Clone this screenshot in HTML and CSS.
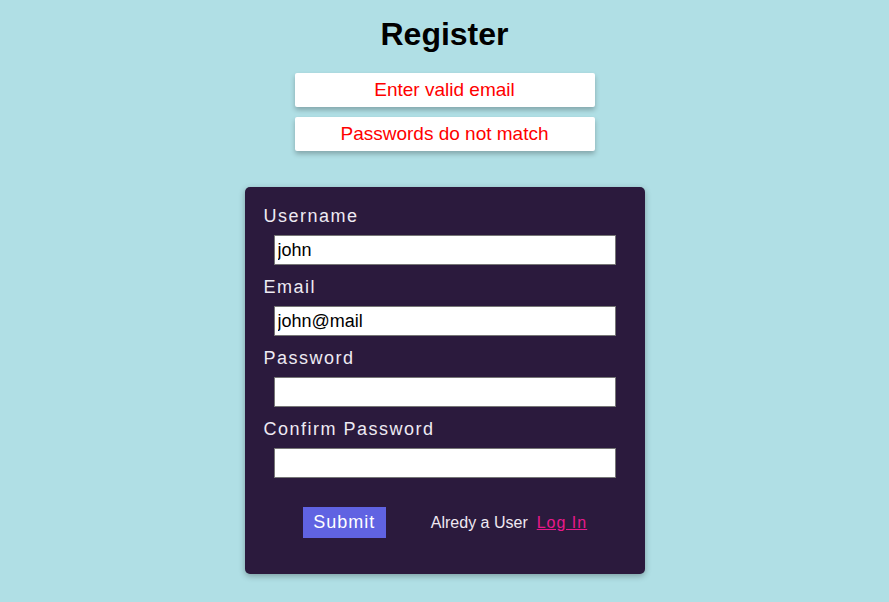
FILE: index.html
```html
<!DOCTYPE html>
<html>
<head>
<meta charset="utf-8">
<link rel="stylesheet" href="styles.css">
</head>
<body>
<div class="page">
  <h1 class="title">Register</h1>
  <div class="errors">
    <div class="error">Enter valid email</div>
    <div class="error">Passwords do not match</div>
  </div>
  <form class="card">
    <div class="field">
      <label class="label">Username</label>
      <input class="input" type="text" value="john">
    </div>
    <div class="field">
      <label class="label">Email</label>
      <input class="input" type="text" value="john@mail">
    </div>
    <div class="field">
      <label class="label">Password</label>
      <input class="input" type="password" value="">
    </div>
    <div class="field">
      <label class="label">Confirm Password</label>
      <input class="input" type="password" value="">
    </div>
    <div class="footer">
      <button class="submit" type="button">Submit</button>
      <span class="already">Alredy a User</span>
      <a class="login" href="#">Log In</a>
    </div>
  </form>
</div>
</body>
</html>
```
FILE: styles.css
```css
html, body {
  margin: 0;
  padding: 0;
}
body {
  background: #b0dfe5;
  font-family: "Liberation Sans", Arial, sans-serif;
  width: 889px;
  height: 602px;
  overflow: hidden;
}
.page {
  display: flex;
  flex-direction: column;
  align-items: center;
  padding-top: 16px;
}
.title {
  margin: 0;
  font-size: 32px;
  line-height: 37px;
  font-weight: bold;
  color: #000;
}
.errors {
  margin-top: 20px;
  display: flex;
  flex-direction: column;
  gap: 10px;
}
.error {
  width: 300px;
  height: 34px;
  box-sizing: border-box;
  background: #fff;
  color: #ff0000;
  font-size: 19px;
  line-height: 33px;
  text-align: center;
  border-radius: 2px;
  box-shadow: 0 3px 5px rgba(0, 0, 0, 0.25);
}
.card {
  margin: 36px 0 0 0;
  width: 400px;
  box-sizing: border-box;
  background: #2b1a3d;
  border-radius: 5px;
  padding: 19px 29px 36px 19px;
  box-shadow: 0 2px 6px rgba(0, 0, 0, 0.3);
  display: flex;
  flex-direction: column;
}
.field {
  display: flex;
  flex-direction: column;
  margin-bottom: 12px;
}
.label {
  font-size: 18px;
  line-height: 21px;
  letter-spacing: 1.5px;
  color: #eeeaf3;
  margin-bottom: 8px;
}
.input {
  margin: 0 0 0 10px;
  width: 342px;
  height: 30px;
  box-sizing: border-box;
  border: 1px solid #767676;
  padding: 0 3px;
  font-family: "Liberation Sans", Arial, sans-serif;
  font-size: 18px;
  color: #000;
  background: #fff;
  outline: none;
}
.footer {
  margin-top: 17px;
  margin-right: -11px;
  display: flex;
  align-items: center;
  justify-content: center;
}
.submit {
  width: 83px;
  height: 31px;
  border: none;
  background: #6063e2;
  color: #fff;
  font-family: "Liberation Sans", Arial, sans-serif;
  font-size: 18px;
  letter-spacing: 1px;
  padding: 0;
  margin-right: 45px;
}
.already {
  font-size: 16px;
  color: #efe8f2;
  margin-right: 9px;
}
.login {
  font-size: 16px;
  color: #e8198b;
  letter-spacing: 1px;
  text-decoration: underline;
}
```
